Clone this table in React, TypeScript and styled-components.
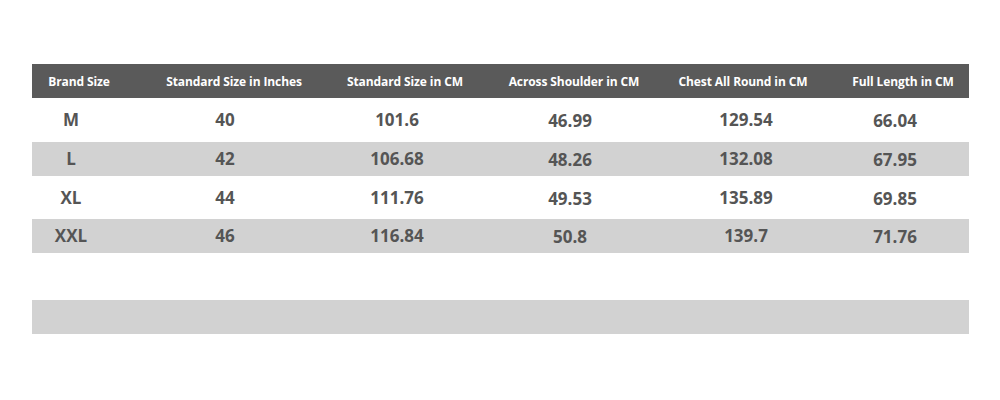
import React from 'react'
import styled, { createGlobalStyle } from 'styled-components'

const GlobalStyle = createGlobalStyle`
  html, body {
    margin: 0;
    padding: 0;
    background: #ffffff;
  }
  body {
    font-family: "Open Sans", "Liberation Sans", sans-serif;
  }
`

const COLUMNS = '124px 163px 170px 169px 165px 146px'

const Page = styled.div`
  width: 1000px;
  height: 400px;
  padding: 64px 31px 0 32px;
  box-sizing: border-box;
`

const Table = styled.div`
  display: flex;
  flex-direction: column;
  width: 937px;
`

const Row = styled.div<{ tone: 'head' | 'white' | 'grey'; h: number }>`
  display: grid;
  grid-template-columns: ${COLUMNS};
  align-items: center;
  height: ${p => p.h}px;
  background: ${p => (p.tone === 'head' ? '#5a5a5a' : p.tone === 'grey' ? '#d2d2d2' : '#ffffff')};
`

const HeadCell = styled.div<{ dx: number }>`
  color: #ffffff;
  font-size: 12px;
  font-weight: 700;
  letter-spacing: -0.1px;
  text-align: center;
  white-space: nowrap;
  padding-left: ${p => (p.dx > 0 ? p.dx * 2 : 0)}px;
  padding-right: ${p => (p.dx < 0 ? -p.dx * 2 : 0)}px;
`

const Cell = styled.div<{ dx: number; dy: number }>`
  color: #555555;
  font-size: 17px;
  font-weight: 700;
  line-height: 20px;
  text-align: center;
  white-space: nowrap;
  padding-left: ${p => (p.dx > 0 ? p.dx * 2 : 0)}px;
  padding-right: ${p => (p.dx < 0 ? -p.dx * 2 : 0)}px;
  padding-top: ${p => (p.dy > 0 ? p.dy * 2 : 0)}px;
`

const Spacer = styled.div`
  height: 47px;
`

const headers = [
  'Brand Size',
  'Standard Size in Inches',
  'Standard Size in CM',
  'Across Shoulder in CM',
  'Chest All Round in CM',
  'Full Length in CM',
]

// shift of the text centre inside each column, as in the chart
const headShift = [-15, -3.5, 1, 0.5, 2.5, 7]
const dataShift = [-23, -12.5, -7, -3.5, 5.5, -1]
const dataDrop = [0, 0, 0, 1, 0, 1]

const rows = [
  { tone: 'white' as const, h: 44, values: ['M', '40', '101.6', '46.99', '129.54', '66.04'] },
  { tone: 'grey' as const, h: 34, values: ['L', '42', '106.68', '48.26', '132.08', '67.95'] },
  { tone: 'white' as const, h: 43, values: ['XL', '44', '111.76', '49.53', '135.89', '69.85'] },
  { tone: 'grey' as const, h: 34, values: ['XXL', '46', '116.84', '50.8', '139.7', '71.76'] },
]

export default function App() {
  return (
    <>
      <GlobalStyle />
      <Page>
        <Table>
          <Row tone="head" h={34}>
            {headers.map((h, i) => (
              <HeadCell key={h} dx={headShift[i]}>
                {h}
              </HeadCell>
            ))}
          </Row>
          {rows.map(r => (
            <Row key={r.values[0]} tone={r.tone} h={r.h}>
              {r.values.map((v, i) => (
                <Cell key={i} dx={dataShift[i]} dy={dataDrop[i]}>
                  {v}
                </Cell>
              ))}
            </Row>
          ))}
          <Spacer />
          <Row tone="grey" h={34} />
        </Table>
      </Page>
    </>
  )
}
